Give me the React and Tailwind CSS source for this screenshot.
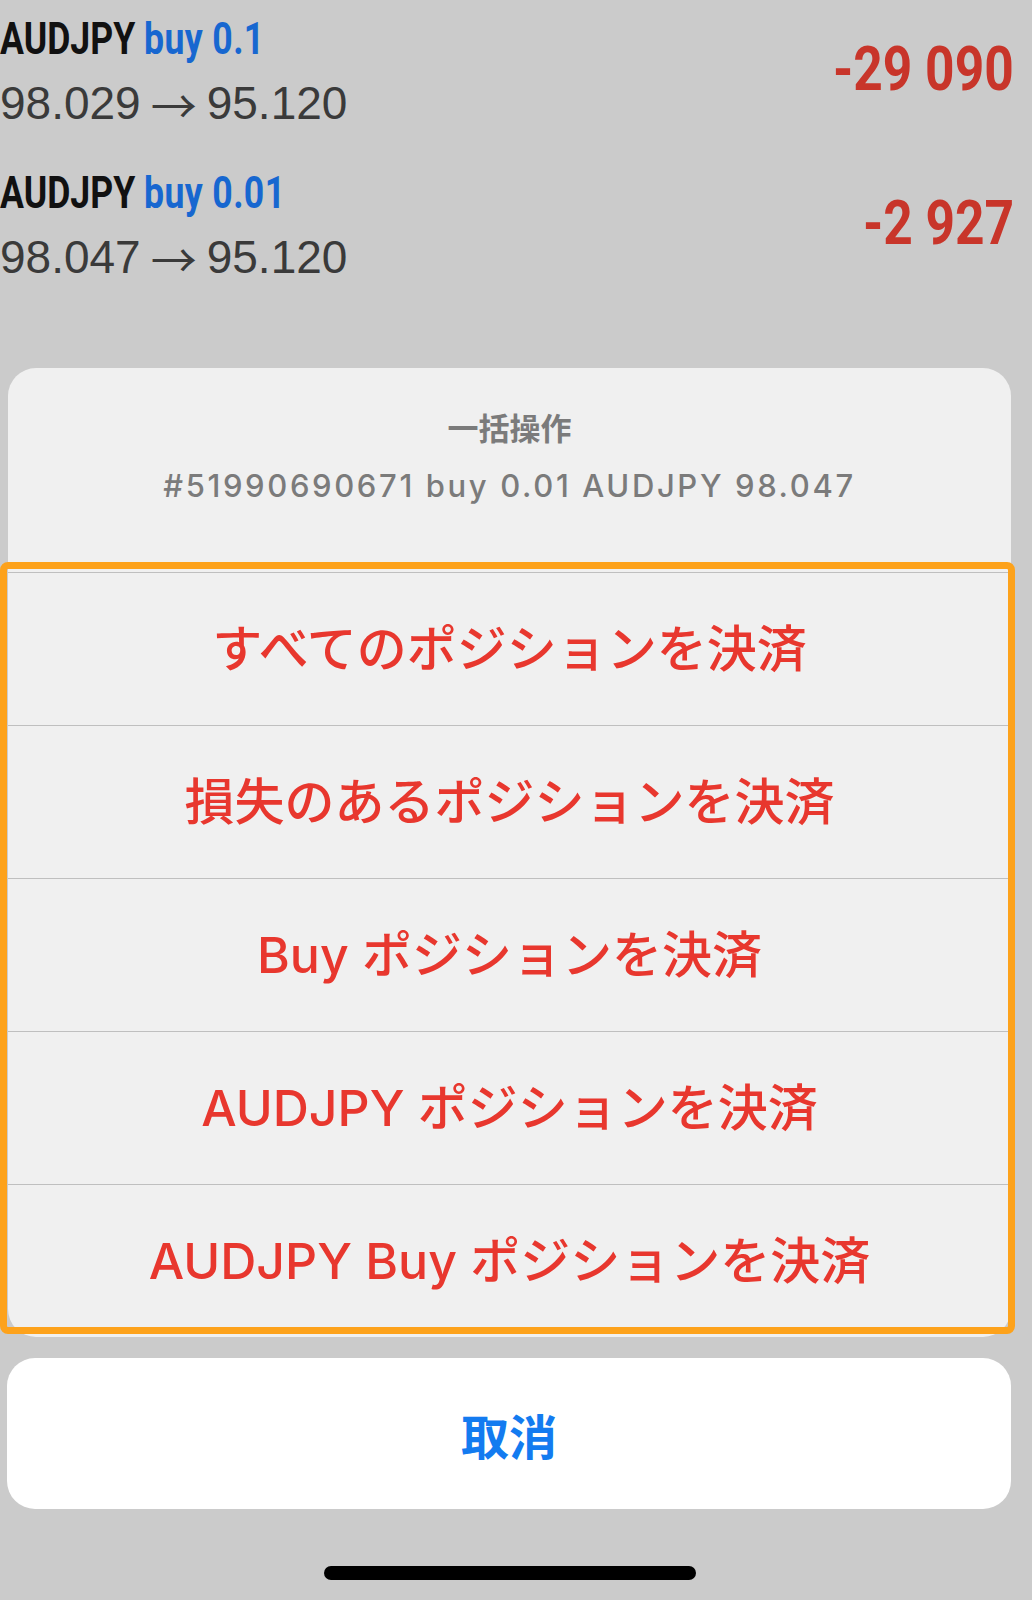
const positions = [
  { lots: '0.1', open: '98.029', now: '95.120', profit: '-29 090' },
  { lots: '0.01', open: '98.047', now: '95.120', profit: '-2 927' },
];

const actions = [
  'すべてのポジションを決済',
  '損失のあるポジションを決済',
  'Buy ポジションを決済',
  'AUDJPY ポジションを決済',
  'AUDJPY Buy ポジションを決済',
];

// no condensed face installed, so Roboto squeezed with scale-x
const cond = { fontFamily: 'Roboto, "Liberation Sans", sans-serif' };
const jp = { fontFamily: '"Noto Sans CJK JP", "Noto Sans", sans-serif' };
const action = { fontFamily: 'Inter, "Noto Sans CJK JP", sans-serif' };

function PositionRow({ p }) {
  return (
    <div className="flex justify-between h-[128px] mb-[26px]">
      <div>
        <div className="h-[64px] leading-[64px] text-[44px] font-bold whitespace-nowrap" style={cond}>
          <span className="inline-block origin-left scale-x-[0.81]">
            <span className="text-[#111111]">AUDJPY</span>{' '}
            <span className="text-[#1767d0] tracking-[0.01em]">buy {p.lots}</span>
          </span>
        </div>
        <div className="flex items-center h-[64px] text-[46px] text-[#3a3a3a] whitespace-nowrap" style={{ fontFamily: '"Liberation Sans", Arial, sans-serif' }}>
          <span>{p.open}</span>
          <span className="mx-[10px] text-[46px] leading-none" style={jp}>→</span>
          <span>{p.now}</span>
        </div>
      </div>
      <div className="mt-[30px] pr-[18px] h-[64px] leading-[64px] text-[62px] font-bold text-[#c8352a] whitespace-nowrap" style={cond}>
        <span className="inline-block origin-right scale-x-[0.83]">{p.profit}</span>
      </div>
    </div>
  );
}

export default function App() {
  return (
    <div className="w-[1032px] h-[1600px] bg-[#cbcbcb] overflow-hidden">
      <div className="h-[368px] pt-[7px]">
        {positions.map((p) => (
          <PositionRow key={p.lots} p={p} />
        ))}
      </div>

      <div className="relative ml-[8px] w-[1003px] bg-[#f0f0f0] rounded-[28px]">
        <div className="h-[204px] pt-[39px] flex flex-col items-center text-[#7b7b7b]">
          <div className="h-[40px] leading-[40px] text-[31px] font-bold" style={jp}>一括操作</div>
          <div className="mt-[19px] h-[40px] leading-[40px] text-[31px] font-medium tracking-[0.085em] whitespace-nowrap" style={{ fontFamily: 'Inter, "Liberation Sans", sans-serif' }}>
            #51990690671 buy 0.01 AUDJPY 98.047
          </div>
        </div>
        {actions.map((a) => (
          <div key={a} className="h-[153px] border-t border-[#bfbfbf] flex items-center justify-center text-[50px] font-medium text-[#e8372e] whitespace-nowrap" style={action}>
            {a}
          </div>
        ))}
        <div className="absolute left-[-8px] top-[194px] w-[1015px] h-[772px] border-[7px] border-[#fda21b] rounded-[8px]" />
      </div>

      <div className="mt-[21px] ml-[7px] w-[1004px] h-[151px] bg-white rounded-[28px] flex items-center justify-center">
        <span className="text-[48px] font-bold text-[#137bf0]" style={jp}>取消</span>
      </div>

      <div className="mt-[57px] ml-[324px] w-[372px] h-[14px] rounded-full bg-black" />
    </div>
  );
}
